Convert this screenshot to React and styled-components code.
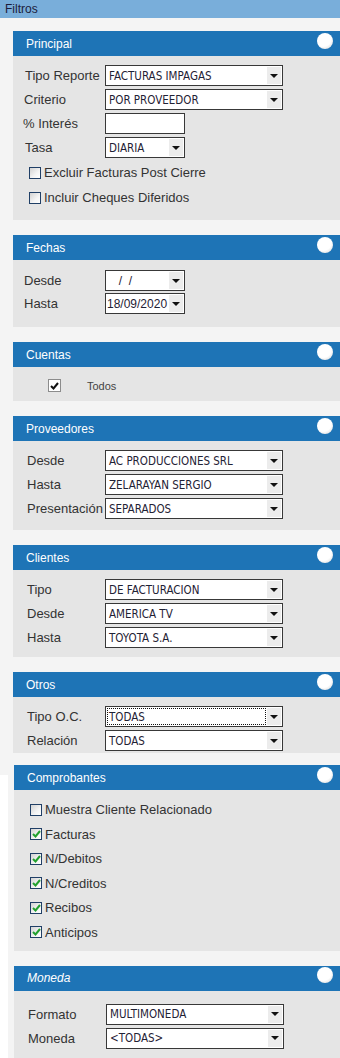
import React from 'react';
import styled, {createGlobalStyle} from 'styled-components';

const GlobalStyle = createGlobalStyle`
    html, body {
        margin: 0;
        padding: 0;
        background: #fff;
    }
`;

const Page = styled.div`
    width: 340px;
    height: 1058px;
    overflow: hidden;
    background: #fff;
    font-family: "Liberation Sans", Arial, sans-serif;
`;

const TitleBar = styled.div`
    height: 18px;
    background: #79aeda;
    color: #1c1c3a;
    font-size: 12px;
    padding-left: 5px;
    display: flex;
    align-items: center;
`;

const TopSection = styled.div`
    background: #f4f4f4;
    padding: 13px 0 22px 13px;
    display: flex;
    flex-direction: column;
    gap: 15px;
`;

const BottomSection = styled.div`
    background: #f4f4f4;
    margin: -10px 0 0 8px;
    padding: 0 0 0 6px;
    display: flex;
    flex-direction: column;
    gap: 15px;
    height: 293px;
`;

const PanelBox = styled.div`
    display: flex;
    flex-direction: column;
    flex: ${p => p.$grow ? 1 : 'none'};
`;

const Header = styled.div`
    height: 25px;
    background: #1e74b6;
    color: #fff;
    font-size: 12px;
    font-style: ${p => p.$italic ? 'italic' : 'normal'};
    padding: 0 7px 0 13px;
    display: flex;
    align-items: center;
    justify-content: space-between;
`;

const Knob = styled.span`
    width: 16px;
    height: 16px;
    border-radius: 50%;
    margin-top: -6px;
    background: radial-gradient(circle at 40% 35%, #fff 55%, #e4e4e4 80%, #a8a8a8 100%);
`;

const Body = styled.div`
    background: #e5e5e5;
    padding: ${p => p.$pad};
    display: flex;
    flex-direction: column;
    gap: ${p => p.$gap || 3}px;
    flex: 1;
`;

const Row = styled.div`
    display: grid;
    grid-template-columns: ${p => p.$label}px auto;
    height: 21px;
    align-items: center;
`;

const Label = styled.span`
    padding-left: ${p => p.$indent}px;
    font-size: 13px;
    color: #333;
    white-space: nowrap;
`;

const SelectBox = styled.div`
    width: ${p => p.$w}px;
    height: 21px;
    box-sizing: border-box;
    border: 1px solid #383838;
    background: #fff;
    display: flex;
`;

const SelectText = styled.span`
    flex: 1;
    display: flex;
    align-items: center;
    padding-left: ${p => p.$pl ?? 3}px;
    margin: ${p => p.$focus ? '1px' : '0'};
    border: ${p => p.$focus ? '1px dotted #111' : 'none'};
    font-family: ${p => p.$date ? '"Liberation Sans", Arial, sans-serif' : '"DejaVu Sans Condensed", "Liberation Sans", sans-serif'};
    font-size: ${p => p.$date ? 12 : 11.5}px;
    color: #1f2235;
    white-space: pre;
    overflow: hidden;
`;

const ArrowZone = styled.span`
    width: 14px;
    margin: 1px 1px 1px 0;
    background: #ececec;
    display: flex;
    align-items: center;
    justify-content: center;
    &::after {
        content: "";
        border-left: 4px solid transparent;
        border-right: 4px solid transparent;
        border-top: 4px solid #111;
    }
`;

const InputBox = styled.div`
    width: 80px;
    height: 21px;
    box-sizing: border-box;
    border: 1px solid #383838;
    background: #fff;
`;

const CheckRow = styled.div`
    display: flex;
    align-items: center;
    gap: 3px;
    height: 13px;
    padding-left: ${p => p.$indent}px;
    margin-top: ${p => p.$mt || 0}px;
    font-size: 13px;
    color: #333;
`;

const Box = styled.span`
    width: 12px;
    height: 12px;
    box-sizing: border-box;
    border: 1px solid #203f66;
    background: linear-gradient(135deg, #d2d2d2 0%, #f4f4f4 60%, #fff 100%);
    display: flex;
    align-items: center;
    justify-content: center;
`;

const PlainBox = styled.span`
    width: 13px;
    height: 13px;
    box-sizing: border-box;
    border: 1px solid #8c8c8c;
    background: #fff;
    display: flex;
    align-items: center;
    justify-content: center;
`;

const AllRow = styled.div`
    display: flex;
    align-items: center;
    gap: 26px;
    padding-left: 35px;
    font-size: 11px;
    color: #444;
`;

const Check = ({color}) => (
    <svg width="9" height="8" viewBox="0 0 9 8">
        <polyline points="1,4 3.5,6.5 8,1" fill="none" stroke={color} strokeWidth="2" />
    </svg>
);

const Panel = ({title, italic, grow, children, pad, gap}) => (
    <PanelBox $grow={grow}>
        <Header $italic={italic}>
            {title}
            <Knob />
        </Header>
        <Body $pad={pad} $gap={gap}>{children}</Body>
    </PanelBox>
);

const Select = ({value, w = 178, focus}) => (
    <SelectBox $w={w}>
        <SelectText $focus={focus} $pl={focus ? 1 : 3}>{value}</SelectText>
        <ArrowZone />
    </SelectBox>
);

const DateSelect = ({value, pl}) => (
    <SelectBox $w={80}>
        <SelectText $date $pl={pl}>{value}</SelectText>
        <ArrowZone />
    </SelectBox>
);

const Field = ({label, indent = 12, col = 92, children}) => (
    <Row $label={col}>
        <Label $indent={indent}>{label}</Label>
        {children}
    </Row>
);

const CheckItem = ({label, checked, mt}) => (
    <CheckRow $indent={16} $mt={mt}>
        <Box>{checked && <Check color="#23a12f" />}</Box>
        {label}
    </CheckRow>
);

const comprobantes = [
    {label: 'Muestra Cliente Relacionado', checked: false},
    {label: 'Facturas', checked: true},
    {label: 'N/Debitos', checked: true},
    {label: 'N/Creditos', checked: true},
    {label: 'Recibos', checked: true},
    {label: 'Anticipos', checked: true},
];

const App = () => {
    return <>
        <GlobalStyle />
        <Page>
            <TitleBar>Filtros</TitleBar>
            <TopSection>
                <Panel title="Principal" pad="9px 0 16px 0">
                    <Field label="Tipo Reporte"><Select value="FACTURAS IMPAGAS" /></Field>
                    <Field label="Criterio" indent={11}><Select value="POR PROVEEDOR" /></Field>
                    <Field label="% Interés" indent={10}><InputBox /></Field>
                    <Field label="Tasa"><Select value="DIARIA" w={80} /></Field>
                    <CheckItem label="Excluir Facturas Post Cierre" mt={5} />
                    <CheckItem label="Incluir Cheques Diferidos" mt={9} />
                </Panel>
                <Panel title="Fechas" pad="10px 0 13px 0" gap={2}>
                    <Field label="Desde" indent={11}><DateSelect value="  /  /" pl={6} /></Field>
                    <Field label="Hasta" indent={11}><DateSelect value="18/09/2020" pl={1} /></Field>
                </Panel>
                <Panel title="Cuentas" pad="12px 0 9px 0">
                    <AllRow>
                        <PlainBox><Check color="#111" /></PlainBox>
                        Todos
                    </AllRow>
                </Panel>
                <Panel title="Proveedores" pad="9px 0 11px 0">
                    <Field label="Desde" indent={14}><Select value="AC PRODUCCIONES SRL" /></Field>
                    <Field label="Hasta" indent={14}><Select value="ZELARAYAN SERGIO" /></Field>
                    <Field label="Presentación" indent={14}><Select value="SEPARADOS" /></Field>
                </Panel>
                <Panel title="Clientes" pad="9px 0 9px 0">
                    <Field label="Tipo" indent={14}><Select value="DE FACTURACION" /></Field>
                    <Field label="Desde" indent={14}><Select value="AMERICA TV" /></Field>
                    <Field label="Hasta" indent={14}><Select value="TOYOTA S.A." /></Field>
                </Panel>
                <Panel title="Otros" pad="9px 0 2px 0">
                    <Field label="Tipo O.C." indent={14}><Select value="TODAS" focus /></Field>
                    <Field label="Relación" indent={14}><Select value="TODAS" /></Field>
                </Panel>
            </TopSection>
            <BottomSection>
                <Panel title="Comprobantes" pad="13px 0 12px 0" gap={11.6}>
                    {comprobantes.map(item =>
                        <CheckItem key={item.label} label={item.label} checked={item.checked} />
                    )}
                </Panel>
                <Panel title="Moneda" italic grow pad="13px 0 0 0">
                    <Field label="Formato" indent={14}><Select value="MULTIMONEDA" /></Field>
                    <Field label="Moneda" indent={14}><Select value="<TODAS>" /></Field>
                </Panel>
            </BottomSection>
        </Page>
    </>;
};

export default App;
